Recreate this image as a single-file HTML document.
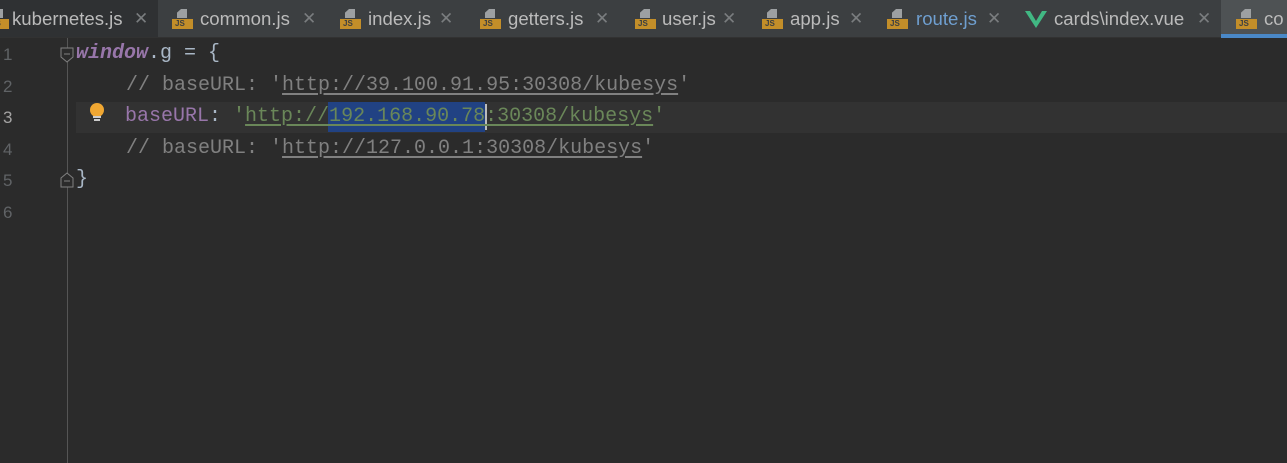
<!DOCTYPE html>
<html><head><style>
body{margin:0;width:1287px;height:463px;background:#2b2b2b;overflow:hidden;position:relative;font-family:"Liberation Mono",monospace}
.tabs{position:absolute;left:0;top:0;width:1287px;height:37px;background:#3c3f41;border-bottom:1px solid #323232}
.tab{position:absolute;top:0;height:37px;font-family:"Liberation Sans",sans-serif;font-size:18.6px;color:#bbbbbb;line-height:37px}
.ico{position:absolute;top:9px;width:21px;height:20px}
.ico .pg{position:absolute;left:5px;top:0;width:10px;height:9px;background:#9da0a2;clip-path:polygon(40% 0,100% 0,100% 100%,0 100%,0 40%)}
.ico .js{position:absolute;left:0;top:10px;width:21px;height:10px;background:#c38e29;color:#3c3f41;font-size:8px;line-height:10px;font-weight:bold;padding-left:3px;box-sizing:border-box}
.x{position:absolute;color:#7a7d7f;font-size:17px}
.ln{position:absolute;left:3px;font-size:17px;color:#606366;font-family:"Liberation Sans",sans-serif}
.code{position:absolute;font-size:20px;white-space:pre;color:#a9b7c6;line-height:32px}
.c{color:#808080}
.u{text-decoration:underline;text-underline-offset:3px}
.s{color:#6a8759}
.k{color:#9876aa}
</style></head><body>
<div class="tabs">
<div class="tab" style="left:0;width:158px;background:#2f3133"><div class="ico" style="left:-12px"><div class="pg"></div><div class="js">JS</div></div><span style="position:absolute;left:12px">kubernetes.js</span><span class="x" style="left:134px">✕</span></div>
<div class="tab" style="left:172px"><div class="ico"><div class="pg"></div><div class="js">JS</div></div><span style="position:absolute;left:28px">common.js</span><span class="x" style="left:130px">✕</span></div>
<div class="tab" style="left:340px"><div class="ico"><div class="pg"></div><div class="js">JS</div></div><span style="position:absolute;left:28px">index.js</span><span class="x" style="left:99px">✕</span></div>
<div class="tab" style="left:480px"><div class="ico"><div class="pg"></div><div class="js">JS</div></div><span style="position:absolute;left:28px">getters.js</span><span class="x" style="left:115px">✕</span></div>
<div class="tab" style="left:635px"><div class="ico"><div class="pg"></div><div class="js">JS</div></div><span style="position:absolute;left:27px">user.js</span><span class="x" style="left:87px">✕</span></div>
<div class="tab" style="left:762px"><div class="ico"><div class="pg"></div><div class="js">JS</div></div><span style="position:absolute;left:28px">app.js</span><span class="x" style="left:87px">✕</span></div>
<div class="tab" style="left:887px"><div class="ico"><div class="pg"></div><div class="js">JS</div></div><span style="position:absolute;left:29px;color:#6f9fd0">route.js</span><span class="x" style="left:100px">✕</span></div>
<div class="tab" style="left:1025px"><svg style="position:absolute;left:0;top:11px" width="22" height="17" viewBox="0 0 22 17"><polygon points="0,0 5,0 11,10 17,0 22,0 11,17" fill="#41b883"/></svg><span style="position:absolute;left:29px">cards\index.vue</span><span class="x" style="left:172px">✕</span></div>
<div class="tab" style="left:1221px;width:66px;background:#4e5254;border-bottom:4px solid #4a88c7;height:34px"><div class="ico" style="left:15px"><div class="pg"></div><div class="js">JS</div></div><span style="position:absolute;left:43px;line-height:37px">co</span></div>
</div>
<div style="position:absolute;left:67px;top:38px;width:1px;height:425px;background:#555"></div>
<div style="position:absolute;left:76px;top:102px;width:1211px;height:31px;background:#323232"></div>
<div style="position:absolute;left:328px;top:102px;width:157px;height:30px;background:#214283"></div>
<div style="position:absolute;left:485px;top:104px;width:2px;height:26px;background:#bbbbbb"></div>
<div class="ln" style="top:45px">1</div>
<div class="ln" style="top:77px">2</div>
<div class="ln" style="top:108px;color:#a4a3a3">3</div>
<div class="ln" style="top:140px">4</div>
<div class="ln" style="top:171px">5</div>
<div class="ln" style="top:203px">6</div>
<svg style="position:absolute;left:60px;top:47px" width="14" height="16"><path d="M1 1H13V10L7 15L1 10Z" fill="#2b2b2b" stroke="#808080"/><path d="M4 7H10" stroke="#808080"/></svg>
<svg style="position:absolute;left:60px;top:172px" width="14" height="16"><path d="M1 15H13V6L7 1L1 6Z" fill="#2b2b2b" stroke="#808080"/><path d="M4 9H10" stroke="#808080"/></svg>
<svg style="position:absolute;left:88px;top:102px" width="18" height="22"><circle cx="9" cy="8" r="7" fill="#f0a732"/><rect x="5" y="14" width="8" height="2" fill="#ccc"/><rect x="6" y="17" width="6" height="2" fill="#ccc"/></svg>
<div class="code" style="left:76px;top:38px"><span class="k" style="font-style:italic;font-weight:bold">window</span>.g = {</div>
<div class="code" style="left:126px;top:70px"><span class="c">// baseURL: '<span class="u">http://39.100.91.95:30308/kubesys</span>'</span></div>
<div class="code" style="left:125px;top:101px"><span class="k">baseURL</span>: <span class="s">'<span class="u">http://192.168.90.78:30308/kubesys</span>'</span></div>
<div class="code" style="left:126px;top:133px"><span class="c">// baseURL: '<span class="u">http://127.0.0.1:30308/kubesys</span>'</span></div>
<div class="code" style="left:76px;top:164px">}</div>
</body></html>
